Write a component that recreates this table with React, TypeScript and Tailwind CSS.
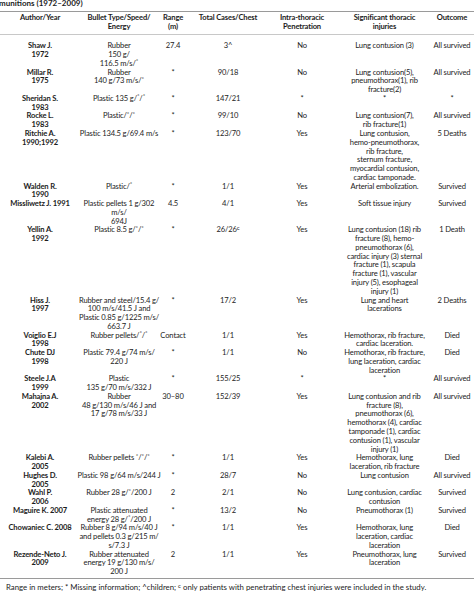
import React from "react";

type Cell = React.ReactNode[];

const S = ({ children }: { children: React.ReactNode }) => (
  <span className="relative -top-[2.5px] text-[6px] leading-none align-baseline">{children}</span>
);

const st = <S>*</S>;

type Row = {
  author: string[];
  bullet: Cell;
  range: string;
  total: React.ReactNode;
  intra: string;
  injuries: string[];
  outcome: string;
};

const rows: Row[] = [
  {
    author: ["Shaw J.", "1972"],
    bullet: ["Rubber", "150 g/", <>116.5 m/s/{st}</>],
    range: "27.4",
    total: "3^",
    intra: "No",
    injuries: ["Lung contusion (3)"],
    outcome: "All survived",
  },
  {
    author: ["Millar R.", "1975"],
    bullet: ["Rubber", <>140 g/73 m/s/{st}</>],
    range: "*",
    total: "90/18",
    intra: "No",
    injuries: ["Lung contusion(5),", "pneumothorax(1), rib", "fracture(2)"],
    outcome: "All survived",
  },
  {
    author: ["Sheridan S.", "1983"],
    bullet: [<>Plastic 135 g/{st}/{st}</>],
    range: "*",
    total: "147/21",
    intra: "*",
    injuries: ["*"],
    outcome: "*",
  },
  {
    author: ["Rocke L.", "1983"],
    bullet: [<>Plastic/{st}/{st}</>],
    range: "*",
    total: "99/10",
    intra: "No",
    injuries: ["Lung contusion(7),", "rib fracture(1)"],
    outcome: "All survived",
  },
  {
    author: ["Ritchie A.", "1990;1992"],
    bullet: ["Plastic 134.5 g/69.4 m/s"],
    range: "*",
    total: "123/70",
    intra: "Yes",
    injuries: [
      "Lung contusion,",
      "hemo-pneumothorax,",
      "rib fracture,",
      "sternum fracture,",
      "myocardial contusion,",
      "cardiac tamponade.",
    ],
    outcome: "5 Deaths",
  },
  {
    author: ["Walden R.", "1990"],
    bullet: [<>Plastic/{st}</>],
    range: "*",
    total: "1/1",
    intra: "Yes",
    injuries: ["Arterial embolization."],
    outcome: "Survived",
  },
  {
    author: ["Missliwetz J. 1991"],
    bullet: ["Plastic pellets 1 g/302", "m/s/", "694J"],
    range: "4.5",
    total: "4/1",
    intra: "Yes",
    injuries: ["Soft tissue injury"],
    outcome: "Survived",
  },
  {
    author: ["Yellin A.", "1992"],
    bullet: [<>Plastic 8.5 g/{st}/{st}</>],
    range: "*",
    total: <>26/26<S>c</S></>,
    intra: "Yes",
    injuries: [
      "Lung contusion (18) rib",
      "fracture (8), hemo-",
      "pneumothorax (6),",
      "cardiac injury (3) sternal",
      "fracture (1), scapula",
      "fracture (1), vascular",
      "injury (5), esophageal",
      "injury (1)",
    ],
    outcome: "1 Death",
  },
  {
    author: ["Hiss J.", "1997"],
    bullet: [
      "Rubber and steel/15.4 g/",
      "100 m/s/41.5 J and",
      "Plastic 0.85 g/1225 m/s/",
      "663.7 J",
    ],
    range: "*",
    total: "17/2",
    intra: "Yes",
    injuries: ["Lung and heart", "lacerations"],
    outcome: "2 Deaths",
  },
  {
    author: ["Voiglio E.J", "1998"],
    bullet: [<>Rubber pellets/{st}/{st}</>],
    range: "Contact",
    total: "1/1",
    intra: "Yes",
    injuries: ["Hemothorax, rib fracture,", "cardiac laceration."],
    outcome: "Died",
  },
  {
    author: ["Chute DJ", "1998"],
    bullet: ["Plastic 79.4 g/74 m/s/", "220 J"],
    range: "*",
    total: "1/1",
    intra: "No",
    injuries: ["Hemothorax, rib fracture,", "lung laceration, cardiac", "laceration"],
    outcome: "Died",
  },
  {
    author: ["Steele J.A", "1999"],
    bullet: ["Plastic", "135 g/70 m/s/332 J"],
    range: "*",
    total: "155/25",
    intra: "*",
    injuries: ["*"],
    outcome: "All survived",
  },
  {
    author: ["Mahajna A.", "2002"],
    bullet: ["Rubber", "48 g/130 m/s/46 J and", "17 g/78 m/s/33 J"],
    range: "30–80",
    total: "152/39",
    intra: "Yes",
    injuries: [
      "Lung contusion and rib",
      "fracture (8),",
      "pneumothorax (6),",
      "hemothorax (4), cardiac",
      "tamponade (1), cardiac",
      "contusion (1), vascular",
      "injury (1)",
    ],
    outcome: "All survived",
  },
  {
    author: ["Kalebi A.", "2005"],
    bullet: [<>Rubber pellets {st}/{st}/{st}</>],
    range: "*",
    total: "1/1",
    intra: "Yes",
    injuries: ["Hemothorax, lung", "laceration, rib fracture"],
    outcome: "Died",
  },
  {
    author: ["Hughes D.", "2005"],
    bullet: ["Plastic 98 g/64 m/s/244 J"],
    range: "*",
    total: "28/7",
    intra: "No",
    injuries: ["Lung contusion"],
    outcome: "All survived",
  },
  {
    author: ["Wahl P.", "2006"],
    bullet: [<>Rubber 28 g/{st}/200 J</>],
    range: "2",
    total: "2/1",
    intra: "No",
    injuries: ["Lung contusion, cardiac", "contusion"],
    outcome: "Survived",
  },
  {
    author: ["Maguire K. 2007"],
    bullet: ["Plastic attenuated", <>energy 28 g/{st}/200 J</>],
    range: "*",
    total: "13/2",
    intra: "No",
    injuries: ["Pneumothorax (1)"],
    outcome: "Survived",
  },
  {
    author: ["Chowaniec C. 2008"],
    bullet: ["Rubber 8 g/94 m/s/40 J", "and pellets 0.3 g/215 m/", "s/7.3 J"],
    range: "*",
    total: "1/1",
    intra: "Yes",
    injuries: ["Hemothorax, lung", "laceration, cardiac", "laceration"],
    outcome: "Died",
  },
  {
    author: ["Rezende-Neto J.", "2009"],
    bullet: ["Rubber attenuated", "energy 19 g/130 m/s/", "200 J"],
    range: "2",
    total: "1/1",
    intra: "Yes",
    injuries: ["Pneumothorax, lung", "laceration"],
    outcome: "Survived",
  },
];

const grid = "grid grid-cols-[80px_78px_30px_80px_68px_97px_38px]";

function Lines({ lines, className = "" }: { lines: React.ReactNode[]; className?: string }) {
  return (
    <div className={"flex flex-col items-center text-center " + className}>
      {lines.map((l, i) => (
        <div key={i} className="whitespace-nowrap h-[8.78px]">
          {l}
        </div>
      ))}
    </div>
  );
}

export default function App() {
  return (
    <div
      className="w-[474px] h-[598px] overflow-hidden bg-white text-[#1c1c1c] text-[7.6px] leading-[8.78px] tracking-[-0.15px]"
      style={{ fontFamily: "Lato, 'Open Sans', sans-serif" }}
    >
      <div className="-mt-[1px] -ml-[1px] font-bold text-[8px] tracking-normal">munitions (1972–2009)</div>
      <div className="mt-[3px] border-t border-[#9a9a9a]" />
      <div className={grid + " pt-[1px] pb-[4px] font-bold"}>
        <Lines lines={["Author/Year"]} />
        <Lines lines={["Bullet Type/Speed/", "Energy"]} />
        <Lines lines={["Range", "(m)"]} />
        <Lines lines={["Total Cases/Chest"]} />
        <Lines lines={["Intra-thoracic", "Penetration"]} />
        <Lines lines={["Significant thoracic", "injuries"]} />
        <Lines lines={["Outcome"]} />
      </div>
      <div className="border-t border-[#c8c8c8]" />
      <div className="pt-[6px] flex flex-col">
        {rows.map((r, i) => (
          <div key={i} className={grid}>
            <Lines lines={r.author} className="font-bold" />
            <Lines lines={r.bullet} />
            <Lines lines={[r.range]} />
            <Lines lines={[r.total]} />
            <Lines lines={[r.intra]} />
            <Lines lines={r.injuries} />
            <Lines lines={[r.outcome]} />
          </div>
        ))}
      </div>
      <div className="mt-[2px] border-t border-[#9a9a9a]" />
      <div className="pt-[4px] pl-[6px] whitespace-nowrap text-[7.8px] tracking-normal">
        Range in meters; * Missing information; ^children; <S>c</S> only patients with penetrating chest
        injuries were included in the study.
      </div>
    </div>
  );
}
